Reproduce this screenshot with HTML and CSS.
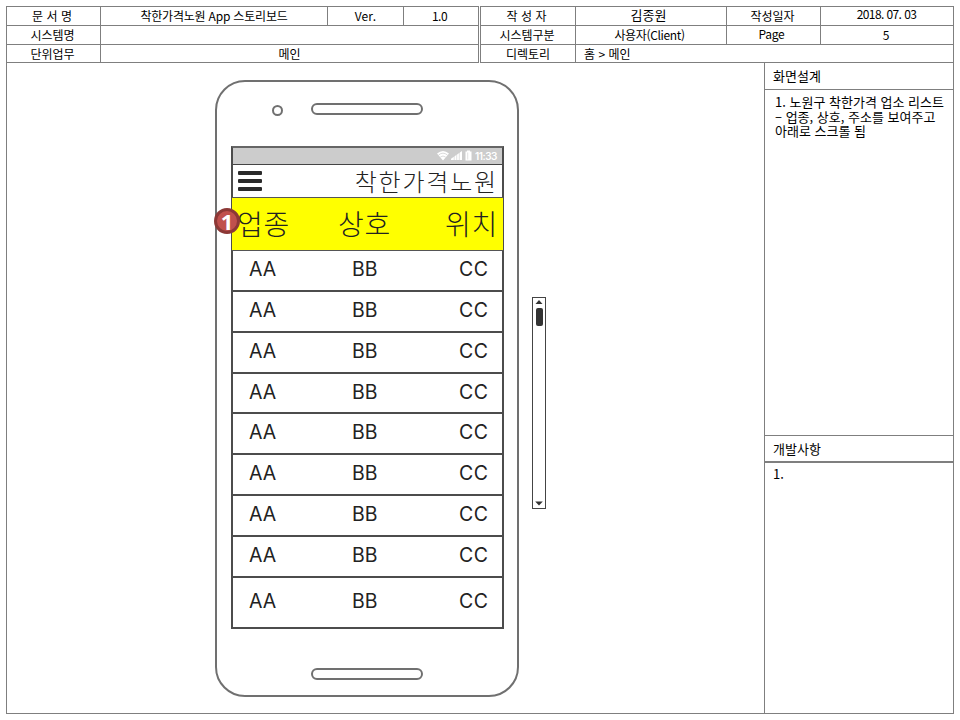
FILE: index.html
```html
<!DOCTYPE html>
<html lang="ko">
<head>
<meta charset="utf-8">
<title>착한가격노원 App 스토리보드</title>
<link rel="stylesheet" href="styles.css">
</head>
<body>
<header class="doc-head">
  <div class="meta meta-left">
    <div class="cell spaced">문 서 명</div><div class="cell title">착한가격노원 App 스토리보드</div><div class="cell">Ver.</div><div class="cell tight">1.0</div>
    <div class="cell label">시스템명</div><div class="cell wide"></div>
    <div class="cell label">단위업무</div><div class="cell wide">메인</div>
  </div>
  <div class="meta meta-right">
    <div class="cell spaced">작 성 자</div><div class="cell author">김종원</div><div class="cell label">작성일자</div><div class="cell date">2018. 07. 03</div>
    <div class="cell label">시스템구분</div><div class="cell client">사용자(Client)</div><div class="cell page-label">Page</div><div class="cell label">5</div>
    <div class="cell">디렉토리</div><div class="cell wide path">홈 &gt; 메인</div>
  </div>
</header>
<main class="board">
  <section class="canvas">
    <div class="phone">
      <div class="phone-top"><span class="camera"></span><span class="speaker"></span></div>
      <div class="screen">
        <div class="status">
          <svg class="status-icons" width="36" height="12" viewBox="0 0 36 12">
            <path d="M0 3.6Q6-1.6 12 3.6L6 10.5Z" fill="#fff"/>
            <path d="M1.6 5Q6 1.3 10.4 5M3.4 7Q6 5 8.6 7" fill="none" stroke="#ccc" stroke-width=".7"/>
            <path d="M14 10V8.8L25 1V10Z" fill="#fff"/>
            <path d="M17.2 5V10M19.7 4V10M22.3 2V10" stroke="#ccc" stroke-width=".6"/>
            <path d="M28.5 1.5H30V.5H33V1.5H34.5V10.5H28.5Z" fill="#fff"/>
            <path d="M30.7 2.5V9.5" stroke="#ccc" stroke-width=".6"/>
          </svg>
          <span class="time">11:33</span>
        </div>
        <div class="appbar">
          <span class="burger"><i></i><i></i><i></i></span>
          <span class="app-name">착한가격노원</span>
        </div>
        <div class="list-head"><span>업종</span><span>상호</span><span>위치</span><b class="badge">1</b></div>
        <div class="row"><span>AA</span><span>BB</span><span class="cc">CC</span></div>
        <div class="row"><span>AA</span><span>BB</span><span class="cc">CC</span></div>
        <div class="row"><span>AA</span><span>BB</span><span class="cc">CC</span></div>
        <div class="row"><span>AA</span><span>BB</span><span class="cc">CC</span></div>
        <div class="row"><span>AA</span><span>BB</span><span class="cc">CC</span></div>
        <div class="row"><span>AA</span><span>BB</span><span class="cc">CC</span></div>
        <div class="row"><span>AA</span><span>BB</span><span class="cc">CC</span></div>
        <div class="row"><span>AA</span><span>BB</span><span class="cc">CC</span></div>
        <div class="row last"><span>AA</span><span>BB</span><span class="cc">CC</span></div>
      </div>
      <span class="home"></span>
    </div>
    <div class="scrollbar">
      <svg width="8" height="5" viewBox="0 0 8 5"><path d="M4 0L7.5 4H.5Z" fill="#333"/></svg>
      <span class="thumb"></span>
      <svg class="down" width="8" height="5" viewBox="0 0 8 5"><path d="M4 4.5L7.8.5H.2Z" fill="#333"/></svg>
    </div>
  </section>
  <aside class="side">
    <h2 class="side-head">화면설계</h2>
    <div class="side-body design">1. 노원구 착한가격 업소 리스트<br>– 업종, 상호, 주소를 보여주고<br>아래로 스크롤 됨</div>
    <h2 class="side-head dev">개발사항</h2>
    <div class="side-body notes">1.</div>
  </aside>
</main>
</body>
</html>
```
FILE: styles.css
```css
* { box-sizing: border-box; }
body {
  margin: 0;
  width: 960px;
  height: 720px;
  padding: 6px;
  overflow: hidden;
  background: #fff;
  color: #000;
  font: 12px/18px "Noto Sans CJK KR", sans-serif;
}
.doc-head { display: flex; gap: 1px; }
.meta {
  display: grid;
  grid-template-rows: 19px 19px 18px;
  border-left: 1px solid #7f7f7f;
  border-top: 1px solid #7f7f7f;
}
.meta-left { grid-template-columns: 94px 227px 76px 75px; }
.meta-right { grid-template-columns: 95px 151px 94px 133px; }
.cell {
  border-right: 1px solid #7f7f7f;
  border-bottom: 1px solid #7f7f7f;
  text-align: center;
  line-height: 17px;
  white-space: nowrap;
  overflow: hidden;
}
.label { padding-right: 2px; }
.spaced { padding-right: 3px; }
.title { letter-spacing: -.2px; }
.tight { padding-right: 3px; letter-spacing: -.5px; }
.wide { grid-column: span 3; }
.author { font-size: 13px; line-height: 16px; padding-right: 5px; }
.client { letter-spacing: -.35px; padding-right: 3px; }
.page-label { letter-spacing: -.3px; padding-right: 4px; line-height: 16px; }
.path { text-align: left; padding-left: 8px; }
.date { line-height: 14px; letter-spacing: -.6px; padding-right: 1px; }
.board {
  display: grid;
  grid-template-columns: 1fr 189px;
  width: 948px;
  height: 651px;
  border: 1px solid #7f7f7f;
  border-top: 0;
}
.canvas { display: flex; align-items: flex-start; padding: 17px 0 0 208px; }
.phone {
  width: 304px;
  height: 617px;
  border: 2px solid #707070;
  border-radius: 30px;
  display: flex;
  flex-direction: column;
  align-items: center;
}
.phone-top { display: flex; align-self: stretch; height: 64px; padding: 21px 0 0 55px; }
.camera { width: 11px; height: 11px; margin-top: 2px; border: 2px solid #707070; border-radius: 50%; }
.speaker, .home { width: 112px; height: 12px; border: 2px solid #707070; border-radius: 6px; }
.speaker { margin-left: 28px; }
.home { margin-top: 39px; margin-right: 1px; }
.screen { width: 273px; height: 483px; margin-left: 1px; border: 2px solid #4c4c4c; border-top-color: #666; }
.status {
  height: 17px;
  background: #ccc;
  border-bottom: 1px solid #444;
  display: flex;
  justify-content: flex-end;
  padding: 2px 4px 0 0;
  color: #fff;
}
.time { width: 23px; margin-left: 2px; font: 600 10px/13px Inter, sans-serif; letter-spacing: -.5px; white-space: nowrap; }
.appbar { display: flex; justify-content: space-between; height: 32px; padding: 0 4px 0 5px; }
.burger { display: flex; flex-direction: column; gap: 4px; padding-top: 6px; }
.burger i { width: 24px; height: 4px; border-radius: 1px; background: #2a2a2a; }
.app-name { font-size: 24px; line-height: 31px; letter-spacing: 1.8px; font-weight: 300; color: #222; }
.list-head {
  position: relative;
  display: grid;
  grid-template-columns: 101px 107px 1fr;
  height: 54px;
  margin: 0 -1px;
  padding-left: 5px;
  background: #ff0;
  border-top: 1px solid #555;
  border-bottom: 1px solid #555;
  font-size: 28px;
  font-weight: 300;
  line-height: 50px;
  letter-spacing: .8px;
  white-space: nowrap;
  color: #222;
}
.badge {
  position: absolute;
  left: -18px;
  top: 10px;
  width: 26px;
  height: 26px;
  border: 3px solid #8c3836;
  border-radius: 50%;
  background: #c0504d;
  color: #fff;
  font: bold 22px/20px "Noto Sans", sans-serif;
  text-align: center;
  letter-spacing: 0;
}
.row {
  display: grid;
  grid-template-columns: 103px 107px 1fr;
  height: 40.85px;
  padding-left: 16px;
  border-bottom: 2px solid #4c4c4c;
  color: #222;
  font: 19.5px/36px Inter, sans-serif;
}
.cc { letter-spacing: .6px; }
.last { height: 50px; border-bottom: 0; line-height: 46px; }
.scrollbar {
  display: flex;
  flex-direction: column;
  align-items: center;
  width: 14px;
  height: 212px;
  margin: 217px 0 0 13px;
  padding: 2px 0;
  border: 1px solid #444;
}
.thumb { width: 7px; height: 18px; margin-top: 3px; border-radius: 2px; background: #333; }
.down { margin-top: auto; }
.side { border-left: 1px solid #7f7f7f; display: grid; grid-template-rows: 27px 345px 28px 1fr; }
.side-head { margin: 0; padding-left: 8px; font-size: 13px; font-weight: 400; line-height: 25px; border-bottom: 1px solid #7f7f7f; }
.side-body { font-size: 13px; line-height: 14.5px; white-space: nowrap; }
.design { padding: 5px 0 0 10px; }
.dev { border-top: 1px solid #7f7f7f; border-bottom-width: 2px; }
.notes { padding: 4px 0 0 8px; }
```
